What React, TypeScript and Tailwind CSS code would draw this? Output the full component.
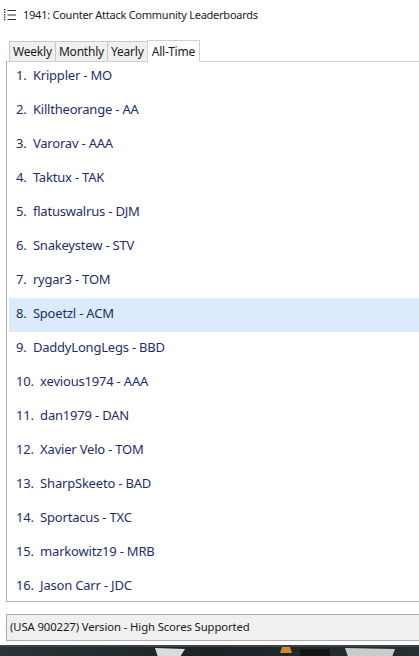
import React from "react";

const entries = [
  "Krippler - MO",
  "Killtheorange - AA",
  "Varorav - AAA",
  "Taktux - TAK",
  "flatuswalrus - DJM",
  "Snakeystew - STV",
  "rygar3 - TOM",
  "Spoetzl - ACM",
  "DaddyLongLegs - BBD",
  "xevious1974 - AAA",
  "dan1979 - DAN",
  "Xavier Velo - TOM",
  "SharpSkeeto - BAD",
  "Sportacus - TXC",
  "markowitz19 - MRB",
  "Jason Carr - JDC",
];

const tabs = ["Weekly", "Monthly", "Yearly", "All-Time"];

function ListIcon() {
  return (
    <svg width="14" height="14" viewBox="0 0 14 14" className="shrink-0">
      <g fill="#333">
        <rect x="1" y="1" width="1.4" height="1.4" />
        <rect x="1" y="3.5" width="1.4" height="1.4" />
        <rect x="1" y="6" width="1.4" height="1.4" />
        <rect x="1" y="8.5" width="1.4" height="1.4" />
        <rect x="1" y="11" width="1.4" height="1.4" />
      </g>
      <g stroke="#333" strokeWidth="1">
        <line x1="4.5" y1="2.5" x2="13" y2="2.5" />
        <line x1="4.5" y1="7" x2="13" y2="7" />
        <line x1="4.5" y1="11.5" x2="13" y2="11.5" />
      </g>
    </svg>
  );
}

export default function App() {
  return (
    <div
      className="w-[419px] h-[656px] bg-white overflow-hidden flex flex-col text-[#1a1a1a]"
      style={{ fontFamily: '"Noto Sans", "Open Sans", sans-serif' }}
    >
      <div className="h-[28px] flex items-center gap-[6px] pl-[3px] pt-[1px]">
        <ListIcon />
        <span className="text-[11px] leading-none tracking-[-0.25px]">
          1941: Counter Attack Community Leaderboards
        </span>
      </div>
      <div className="pl-[6px] mt-[12px] flex flex-col">
        <div className="flex items-end pl-[3px] h-[21px]">
          {tabs.map((t) => {
            const sel = t === "All-Time";
            return sel ? (
              <div
                key={t}
                className="h-[22px] -mb-[1px] relative z-10 bg-white border border-b-0 border-[#d0d0d0] px-[4px] flex items-center text-[12px] tracking-[-0.2px]"
              >
                {t}
              </div>
            ) : (
              <div
                key={t}
                className="h-[20px] bg-[#f0f0f0] border border-r-0 border-b-0 border-[#c8c8c8] px-[3px] flex items-center text-[12px] tracking-[-0.2px]"
              >
                {t}
              </div>
            );
          })}
        </div>
        <div className="h-[541px] border-t border-l border-b border-t-[#d0d0d0] border-l-[#adadad] border-b-[#adadad] pl-[2px] flex flex-col">
          <div className="-mt-[2px] flex flex-col">
            {entries.map((e, i) => (
              <div
                key={i}
                className={
                  "h-[34px] shrink-0 flex items-center pl-[7px] pb-[3px] text-[13px] text-[#1f2d6b] whitespace-pre tracking-[-0.2px] " +
                  (i === 7 ? "bg-[#dcebfc]" : "")
                }
              >
                {`${i + 1}.  ${e}`}
              </div>
            ))}
          </div>
        </div>
        <div className="mt-[12px] h-[27px] bg-[#f0f0f0] border-t border-l border-b border-[#adadad] flex items-center pl-[3px] text-[11.3px] tracking-[-0.1px]">
          (USA 900227) Version - High Scores Supported
        </div>
      </div>
      <div className="mt-[4px] flex-1 bg-[#1c2426] relative overflow-hidden">
        <svg width="419" height="12" viewBox="0 0 419 12" className="block">
          <defs>
            <linearGradient id="g" x1="0" x2="1" y1="0" y2="0">
              <stop offset="0" stopColor="#2a3436" />
              <stop offset="0.5" stopColor="#1a2224" />
              <stop offset="1" stopColor="#263032" />
            </linearGradient>
          </defs>
          <rect width="419" height="12" fill="url(#g)" />
          <rect x="0" y="0" width="419" height="2" fill="#3a4446" />
          <polygon points="155,3 185,4 180,12 158,12" fill="#d8dcdc" />
          <polygon points="282,2 290,2 292,8 280,8" fill="#d2862e" />
          <polygon points="345,3 395,4 392,12 348,12" fill="#c8cccc" />
          <rect x="300" y="4" width="30" height="8" fill="#121818" />
        </svg>
      </div>
    </div>
  );
}
